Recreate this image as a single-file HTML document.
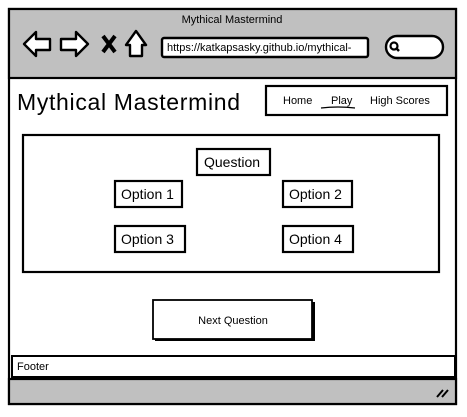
<!DOCTYPE html>
<html><head><meta charset="utf-8"><style>
html,body{margin:0;padding:0;background:#fff;width:467px;height:417px;overflow:hidden}
svg{display:block}
text{font-family:"Liberation Sans",sans-serif;fill:#000}
</style></head><body>
<svg width="467" height="417" viewBox="0 0 467 417">
<rect x="9" y="9" width="447" height="395" fill="#fff" stroke="#000" stroke-width="2.2"/>
<rect x="9" y="9" width="447" height="69" fill="#c0c0c0" stroke="#000" stroke-width="2.2"/>
<text x="232" y="23" font-size="11" text-anchor="middle">Mythical Mastermind</text>
<g fill="#fff" stroke="#000" stroke-width="2.4" stroke-linejoin="round">
<path d="M24 44 L36 32 L36 39 L50 39 L50 50 L36 50 L36 56 Z"/>
<path d="M88 44 L76 32 L76 39 L61 39 L61 50 L76 50 L76 56 Z"/>
<path d="M126 45 L136 31 L146 45 L142 45 L142 56 L130 56 L130 45 Z"/>
<rect x="162" y="38" width="206" height="19" rx="2"/>
<rect x="386" y="36" width="57" height="22" rx="11"/>
</g>
<path d="M103 36 L115 52 M115 36 L103 52" stroke="#000" stroke-width="4"/>
<circle cx="394" cy="46" r="3.5" fill="none" stroke="#000" stroke-width="2.2"/>
<path d="M396 48 L399 51" stroke="#000" stroke-width="2.5"/>
<text x="167" y="51" font-size="11">https://katkapsasky.github.io/mythical-</text>
<text x="17" y="110" font-size="23" textLength="223" lengthAdjust="spacing">Mythical Mastermind</text>
<rect x="266" y="86" width="181" height="29" fill="#fff" stroke="#000" stroke-width="2.2"/>
<text x="283" y="104" font-size="11">Home</text>
<text x="331" y="104" font-size="11">Play</text>
<path d="M321 108 Q338 106 355 108" stroke="#000" stroke-width="1.2" fill="none"/>
<text x="370" y="104" font-size="11">High Scores</text>
<rect x="23" y="135" width="416" height="137" fill="#fff" stroke="#000" stroke-width="2.2"/>
<g fill="#fff" stroke="#000" stroke-width="2.2">
<rect x="197" y="149" width="73" height="26"/>
<rect x="115" y="181" width="67" height="26"/>
<rect x="283" y="181" width="69" height="26"/>
<rect x="115" y="226" width="70" height="26"/>
<rect x="283" y="226" width="70" height="26"/>
</g>
<g font-size="14">
<text x="204" y="167">Question</text>
<text x="121" y="199">Option 1</text>
<text x="289" y="199">Option 2</text>
<text x="121" y="244">Option 3</text>
<text x="289" y="244">Option 4</text>
</g>
<rect x="155" y="302" width="160" height="39" fill="#000"/>
<rect x="153" y="300" width="159" height="39" fill="#fff" stroke="#000" stroke-width="1.8"/>
<text x="233" y="324" font-size="11" text-anchor="middle">Next Question</text>
<rect x="9" y="379" width="447" height="25" fill="#c0c0c0" stroke="#000" stroke-width="2.2"/>
<rect x="12" y="356" width="443" height="21" fill="#fff" stroke="#000" stroke-width="2"/>
<text x="17" y="370" font-size="11">Footer</text>
<path d="M437 397 L443 390 M442 397 L448 390" stroke="#000" stroke-width="2"/>
</svg>
</body></html>
